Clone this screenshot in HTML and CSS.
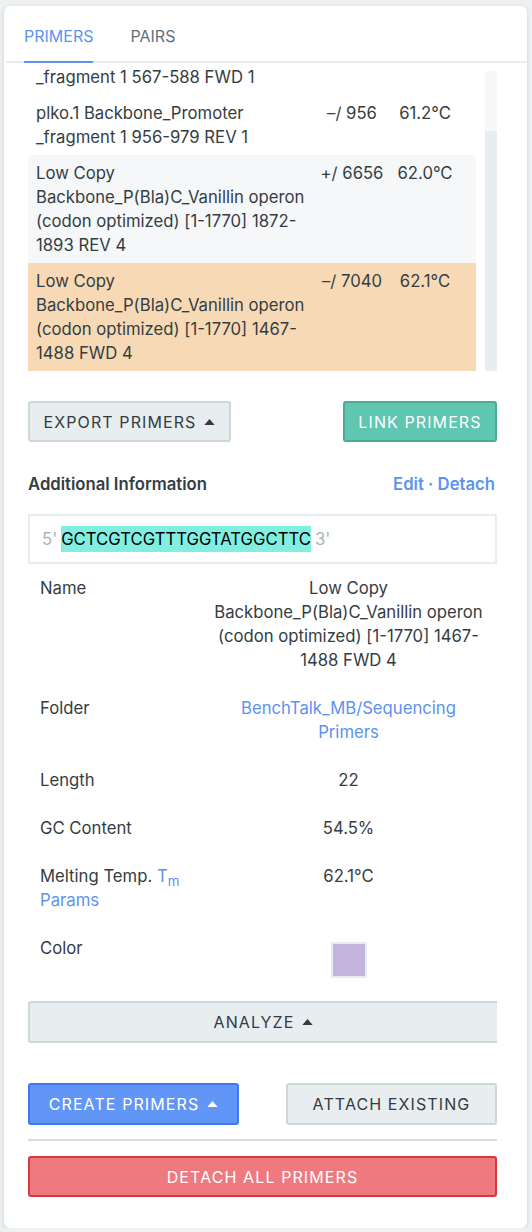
FILE: index.html
```html
<!DOCTYPE html>
<html lang="en">

<head>
    <meta charset="UTF-8">
    <meta name="viewport" content="width=device-width, initial-scale=1.0">
    <title>Primers</title>
    <link rel="stylesheet" href="styles.css">
</head>

<body>

    <div class="panel">
        <nav class="tabs">
            <span class="tab active">PRIMERS</span>
            <span class="tab">PAIRS</span>
        </nav>

        <!-- primer list, scrolled to the bottom -->
        <div class="list">
            <div class="rows">
                <div class="row partial">
                    <div class="name">_fragment 1 567-588 FWD 1</div>
                </div>
                <div class="row">
                    <div class="name">plko.1 Backbone_Promoter _fragment 1 956-979 REV 1</div>
                    <div class="pos">–/ 956</div>
                    <div class="tm">61.2°C</div>
                </div>
                <div class="row alt">
                    <div class="name">Low Copy Backbone_P(Bla)C_Vanillin operon (codon optimized) [1-1770] 1872-<wbr>1893 REV 4</div>
                    <div class="pos">+/ 6656</div>
                    <div class="tm">62.0°C</div>
                </div>
                <div class="row selected">
                    <div class="name">Low Copy Backbone_P(Bla)C_Vanillin operon (codon optimized) [1-1770] 1467-<wbr>1488 FWD 4</div>
                    <div class="pos">–/ 7040</div>
                    <div class="tm">62.1°C</div>
                </div>
            </div>
            <div class="scrollbar"><div class="thumb"></div></div>
        </div>

        <div class="content">
            <div class="actions">
                <button class="btn grey export">EXPORT PRIMERS <svg class="caret" viewBox="0 0 12 7"><polygon points="0,7 6,0 12,7" /></svg></button>
                <button class="btn teal link">LINK PRIMERS</button>
            </div>

            <div class="info-head">
                <span class="info-title">Additional Information</span>
                <span class="info-links"><a>Edit</a> · <a>Detach</a></span>
            </div>

            <div class="sequence">
                <span class="end">5'</span>
                <span class="bases">GCTCGTCGTTTGGTATGGCTTC</span>
                <span class="end">3'</span>
            </div>

            <div class="details">
                <div class="label">Name</div>
                <div class="value">Low Copy Backbone_P(Bla)C_Vanillin operon (codon optimized) [1-1770] 1467-<wbr>1488 FWD 4</div>

                <div class="label">Folder</div>
                <div class="value"><a class="folder">BenchTalk_MB/Sequencing Primers</a></div>

                <div class="label">Length</div>
                <div class="value">22</div>

                <div class="label">GC Content</div>
                <div class="value">54.5%</div>

                <div class="label">Melting Temp. <a class="params">T<sub>m</sub> Params</a></div>
                <div class="value">62.1°C</div>

                <div class="label">Color</div>
                <div class="value"><span class="swatch"></span></div>
            </div>

            <div class="analyze-wrap">
                <button class="btn grey analyze">ANALYZE <svg class="caret" viewBox="0 0 12 7"><polygon points="0,7 6,0 12,7" /></svg></button>
            </div>

            <div class="actions create-row">
                <button class="btn blue create">CREATE PRIMERS <svg class="caret" viewBox="0 0 12 7"><polygon points="0,7 6,0 12,7" /></svg></button>
                <button class="btn grey attach">ATTACH EXISTING</button>
            </div>

            <hr class="divider">

            <button class="btn red detach">DETACH ALL PRIMERS</button>
        </div>
    </div>

</body>

</html>
```

FILE: styles.css
```css
body {
    margin: 0;
    padding: 6px 0 0 4px;
    background: #eef1f2;
    font-family: 'Inter', 'Lato', sans-serif;
    font-size: 16.7px;
    line-height: 24px;
    color: #343d42;
}

.panel {
    width: 523px;
    height: 1222px;
    background: #fff;
    border-radius: 6px;
    box-shadow: 0 1px 4px rgba(0, 0, 0, 0.15);
    box-sizing: border-box;
}

/* Tabs */
.tabs {
    display: flex;
    gap: 37px;
    padding: 0 20px;
    border-bottom: 2px solid #e6ecef;
    margin-left: 2px;
}

.tab {
    padding: 18px 0 13px;
    font-size: 16px;
    color: #5f707b;
    margin-bottom: -2px;
    border-bottom: 2px solid transparent;
}

.tab:first-child {
    margin-left: -2px;
}

.tab.active {
    color: #5b93ef;
    border-bottom-color: #5b93ef;
}

/* Primer list */
.list {
    display: flex;
    gap: 9px;
    height: 308px;
    padding: 0 30px 0 24px;
}

.rows {
    flex: 1;
    overflow: hidden;
}

.row {
    display: grid;
    grid-template-columns: 288px 72px 74px;
    padding: 6px 0;
}

.row.partial {
    padding-top: 2px;
}

.row .name {
    padding: 0 8px;
}

.row .pos,
.row .tm {
    text-align: center;
}

.row.alt {
    background-color: #f5f7f9;
}

.row.selected {
    background-color: #f7dab5;
}

.scrollbar {
    width: 12px;
    margin-top: 8px;
    background: #f6f8f8;
    display: flex;
    flex-direction: column;
    justify-content: flex-end;
}

.thumb {
    height: 240px;
    background: #e6eef0;
}

/* Main content */
.content {
    padding: 30px 30px 0 24px;
}

.actions {
    display: flex;
    justify-content: space-between;
}

.btn {
    font-family: inherit;
    font-size: 16px;
    letter-spacing: 1.1px;
    height: 41px;
    border: 2px solid;
    border-radius: 3px;
    padding: 0;
    cursor: pointer;
    display: flex;
    align-items: center;
    justify-content: center;
    gap: 8px;
}

.caret {
    width: 11px;
    height: 6px;
    fill: currentColor;
}

.btn.grey {
    background-color: #e8eef0;
    border-color: #cdd7da;
    color: #323c42;
}

.btn.teal {
    background-color: #5ec6b1;
    border-color: #4bab97;
    color: #fff;
}

.btn.blue {
    background-color: #6196f6;
    border-color: #3e78f0;
    color: #fff;
}

.btn.red {
    background-color: #ee7a80;
    border-color: #d8373f;
    color: #fff;
}

.export {
    width: 203px;
}

.link {
    width: 154px;
}

.info-head {
    display: flex;
    justify-content: space-between;
    margin-top: 30px;
    padding-right: 2px;
}

.info-title {
    font-weight: 600;
}

.info-links {
    color: #5b93ef;
    font-weight: 600;
}

.info-links a {
    color: #5b93ef;
}

.sequence {
    margin-top: 18px;
    border: 2px solid #e6ecef;
    padding: 10px 12px;
    display: flex;
    align-items: center;
    gap: 4px;
}

.sequence .end {
    color: #a9b3b8;
}

.bases {
    background-color: #80efe1;
    color: #000;
    line-height: 26px;
}

/* Detail table */
.details {
    display: grid;
    grid-template-columns: 172px 1fr;
}

.details .label,
.details .value {
    padding: 12px;
}

.details .value {
    text-align: center;
}

.folder,
.params {
    color: #5b93ef;
}

.params sub {
    font-size: 0.8em;
    line-height: 0;
}

.swatch {
    display: inline-block;
    width: 32px;
    height: 32px;
    margin-top: 6px;
    background-color: #c4b3dd;
    border: 2px solid #e6ecef;
    vertical-align: top;
}

.analyze-wrap {
    margin-top: 11px;
    overflow: hidden;
}

.analyze {
    width: 471px;
    height: 42px;
}

.create-row {
    margin-top: 40px;
}

.create,
.attach {
    width: 211px;
    height: 42px;
}

.divider {
    border: none;
    border-top: 2px solid #d9dddf;
    margin: 14px 0 15px;
}

.detach {
    width: 100%;
}
```
